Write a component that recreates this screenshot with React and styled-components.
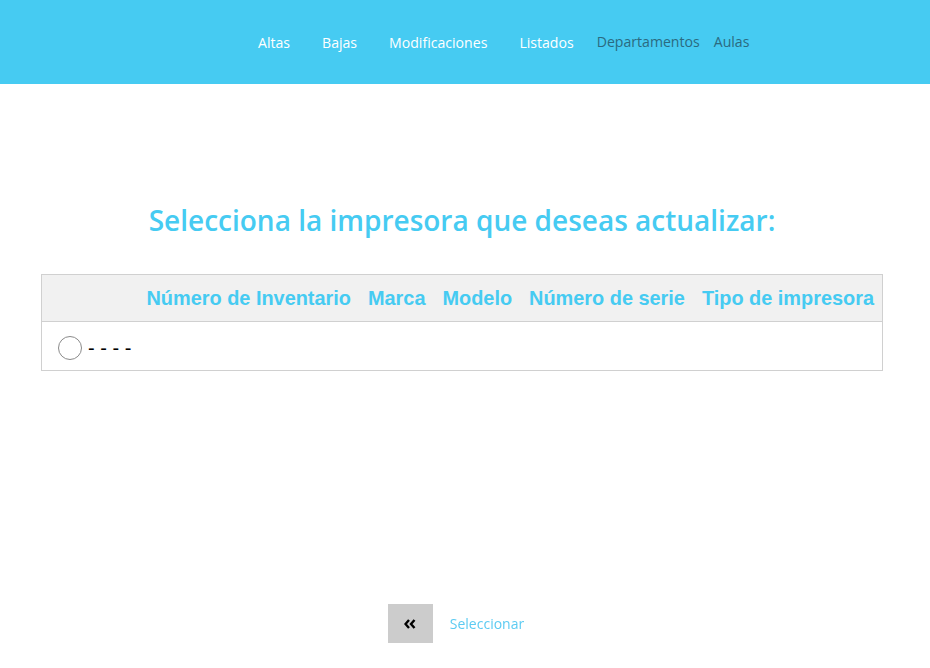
import React, { useState } from 'react';
import styled, { createGlobalStyle } from 'styled-components';

const GlobalStyle = createGlobalStyle`
    html, body {
        margin: 0;
        padding: 0;
        background: #ffffff;
    }
`

const columns = ['Número de Inventario', 'Marca', 'Modelo', 'Número de serie', 'Tipo de impresora'];
const impresoras = [{ id: 1, inventario: '', marca: '', modelo: '', serie: '', tipo: '' }];

const App = () => {
    const [ selected, setSelected ] = useState(null);

    return (
        <>
            <GlobalStyle />
            <Header>
                <Nav>
                    <NavLink>Altas</NavLink>
                    <NavLink>Bajas</NavLink>
                    <NavLink>Modificaciones</NavLink>
                    <NavLink>Listados</NavLink>
                    <NavLink $dark>Departamentos</NavLink>
                    <NavLink $dark>Aulas</NavLink>
                </Nav>
            </Header>
            <Main>
                <Title>Selecciona la impresora que deseas actualizar:</Title>
                <Table>
                    <thead>
                        <tr>
                            <HeadCell $first></HeadCell>
                            {columns.map(c => <HeadCell key={c}>{c}</HeadCell>)}
                        </tr>
                    </thead>
                    <tbody>
                        {impresoras.map(i => (
                            <tr key={i.id}>
                                <BodyCell colSpan={6}>
                                    <Option>
                                        <Radio
                                            type="radio"
                                            name="impresora"
                                            checked={selected === i.id}
                                            onChange={() => setSelected(i.id)}
                                        />
                                        <span>{[i.inventario, i.marca, i.modelo, i.serie, i.tipo].join(' - ')}</span>
                                    </Option>
                                </BodyCell>
                            </tr>
                        ))}
                    </tbody>
                </Table>
            </Main>
            <Footer>
                <BackButton aria-label="Volver">
                    <svg width="12" height="10" viewBox="0 0 12 10">
                        <path d="M5 1 L1.5 5 L5 9" fill="none" stroke="#000" strokeWidth="2.4" />
                        <path d="M10.5 1 L7 5 L10.5 9" fill="none" stroke="#000" strokeWidth="2.4" />
                    </svg>
                </BackButton>
                <SubmitLink>Seleccionar</SubmitLink>
            </Footer>
        </>
    );
};

const Header = styled.header`
    height: 84px;
    background-color: #46cbf2;
    display: flex;
    align-items: center;
`

const Nav = styled.nav`
    display: flex;
    align-items: center;
    margin-left: 242px;
    font-family: "Open Sans", "Noto Sans", sans-serif;
    font-size: 14.1px;
`

const NavLink = styled.a`
    color: ${props => props.$dark ? '#2b6a80' : '#ffffff'};
    padding: ${props => props.$dark ? '0 7px' : '0 16px'};
    margin-top: ${props => props.$dark ? '-2px' : '1px'};
    cursor: pointer;
`

const Main = styled.main`
    padding: 116px 47px 0 41px;
    display: flex;
    flex-direction: column;
    align-items: center;
`

const Title = styled.h1`
    margin: 0 0 34px 0;
    font-family: "Open Sans", "Noto Sans", sans-serif;
    font-weight: 600;
    font-size: 28px;
    color: #46cbf2;
    line-height: 40px;
`

const Table = styled.table`
    width: 100%;
    border-collapse: collapse;
    border: 1px solid #d0d0d0;
    font-family: "Liberation Sans", Arial, sans-serif;
`

const HeadCell = styled.th`
    background-color: #f1f1f1;
    color: #46cbf2;
    font-size: 19.9px;
    font-weight: bold;
    text-align: left;
    height: 46px;
    padding: 0 8px 0 9px;
    white-space: nowrap;
    width: ${props => props.$first ? 'auto' : '1%'};
    border-bottom: 1px solid #d0d0d0;
`

const BodyCell = styled.td`
    height: 48px;
    padding: 0 16px;
`

const Option = styled.label`
    display: flex;
    align-items: center;
    gap: 6px;
    padding-top: 3px;
    font-size: 20px;
    line-height: 24px;
    color: #000;
`

const Radio = styled.input`
    appearance: none;
    width: 24px;
    height: 24px;
    margin: 0;
    border: 1px solid #8a8a8a;
    border-radius: 50%;
    background: #fff;

    &:checked {
        background: radial-gradient(circle, #46cbf2 40%, #fff 45%);
    }
`

const Footer = styled.div`
    position: fixed;
    left: 0;
    right: 0;
    bottom: 25px;
    display: flex;
    justify-content: center;
    align-items: center;
    gap: 17px;
    padding-right: 18px;
`

const BackButton = styled.button`
    width: 45px;
    height: 39px;
    border: none;
    background-color: #cccccc;
    display: flex;
    align-items: center;
    justify-content: center;
    padding: 0;
`

const SubmitLink = styled.a`
    font-family: "Open Sans", "Noto Sans", sans-serif;
    font-size: 14px;
    color: #5ccbf2;
    cursor: pointer;
`

export default App;
